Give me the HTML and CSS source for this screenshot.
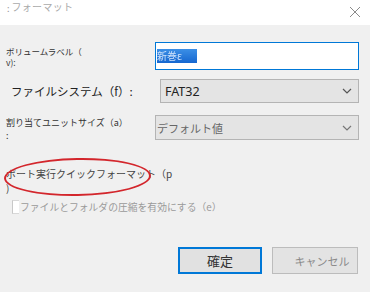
FILE: index.html
```html
<!DOCTYPE html>
<html lang="ja">
<head>
  <meta charset="UTF-8" />
  <meta name="viewport" content="width=device-width, initial-scale=1" />
  <title>フォーマット</title>
  <link rel="stylesheet" href="styles.css">
</head>
<body>

<div class="dialog">
  <div class="titlebar">
    <span class="title-mark">:</span>
    <span class="title">フォーマット</span>
    <svg class="close" width="12" height="12" viewBox="0 0 12 12">
      <path d="M1 1 L11 11 M11 1 L1 11" stroke="#8a8a8a" stroke-width="1" fill="none" />
    </svg>
  </div>

  <div class="content">
    <div class="row row-volume">
      <label class="lbl lbl-small">ボリュームラベル（<br>v):</label>
      <div class="field input"><span class="sel">新巻ε</span></div>
    </div>

    <div class="row row-fs">
      <label class="lbl lbl-big">ファイルシステム（f）:</label>
      <div class="field combo">
        <span class="combo-text">FAT32</span>
        <svg class="chev" width="10" height="6" viewBox="0 0 10 6">
          <path d="M1 1 L5 5 L9 1" stroke="#555" stroke-width="1.2" fill="none" />
        </svg>
      </div>
    </div>

    <div class="row row-unit">
      <label class="lbl lbl-small lbl-unit">割り当てユニットサイズ（a）<br>:</label>
      <div class="field combo">
        <span class="combo-text gray">デフォルト値</span>
        <svg class="chev" width="10" height="6" viewBox="0 0 10 6">
          <path d="M1 1 L5 5 L9 1" stroke="#777" stroke-width="1.2" fill="none" />
        </svg>
      </div>
    </div>

    <div class="quick">
      <span class="quick-text">ポート実行クイックフォーマット（p</span>
      <span class="quick-text">)</span>
      <span class="circle"></span>
    </div>

    <div class="check">
      <span class="box"></span>
      <span class="check-text">ファイルとフォルダの圧縮を有効にする（e）</span>
    </div>

    <div class="buttons">
      <button class="btn btn-ok">確定</button>
      <button class="btn btn-cancel">キャンセル</button>
    </div>
  </div>
</div>

</body>
</html>
```

FILE: styles.css
```css
body {
  margin: 0;
  font-family: "Noto Sans CJK JP", "Noto Sans", sans-serif;
  background-color: #f0f0f0;
  color: #222;
}
.dialog {
  width: 370px;
  height: 292px;
  background-color: #f0f0f0;
}
.titlebar {
  height: 25px;
  background: white;
  display: flex;
  align-items: flex-start;
  padding-left: 7px;
  padding-right: 9px;
  box-sizing: border-box;
}
.title-mark {
  font-size: 9px;
  color: #999;
  line-height: 14px;
  padding-top: 2px;
}
.title {
  font-size: 10px;
  line-height: 12px;
  padding-top: 1px;
  padding-left: 2px;
  color: #aaa;
  letter-spacing: 0.3px;
}
.close {
  margin-left: auto;
  margin-top: 6px;
}
.content {
  padding: 0 11px 0 5px;
}
.row {
  display: flex;
  align-items: center;
}
.row-volume {
  margin-top: 17px;
  height: 28px;
}
.row-fs {
  margin-top: 9px;
  height: 24px;
}
.row-unit {
  margin-top: 12px;
  height: 25px;
}
.lbl {
  width: 149px;
  flex-shrink: 0;
  color: #333;
}
.lbl-small {
  font-size: 8.5px;
  line-height: 11px;
  padding-left: 1px;
  padding-top: 1px;
}
.lbl-unit {
  font-size: 9px;
  line-height: 13px;
  padding-top: 3px;
}
.lbl-big {
  font-size: 11.5px;
  padding-left: 6px;
  color: #222;
}
.field {
  width: 205px;
  height: 100%;
  box-sizing: border-box;
}
.input {
  background: white;
  border: 1px solid #0078d7;
  padding: 1px 0 0 1px;
}
.sel {
  display: inline-block;
  width: 40px;
  height: 14px;
  background: linear-gradient(#3b8fe6, #1667d0);
  color: #cfe3fb;
  font-size: 10px;
  line-height: 14px;
  overflow: hidden;
  filter: blur(0.5px);
}
.combo {
  background-color: #e4e4e4;
  border: 1px solid #b4b4b4;
  display: flex;
  align-items: center;
  padding: 0 6px 0 4px;
}
.combo-text {
  font-family: "Noto Sans", "Noto Sans CJK JP", sans-serif;
  font-size: 12.5px;
  color: #222;
}
.combo-text.gray {
  font-family: "Noto Sans CJK JP", sans-serif;
  font-size: 11px;
  color: #666;
  margin-left: -3px;
}
.chev {
  margin-left: auto;
}
.quick {
  position: relative;
  display: flex;
  flex-direction: column;
  margin-top: 27px;
  padding-left: 1px;
}
.quick-text {
  font-size: 10px;
  line-height: 14px;
  color: #444;
}
.circle {
  position: absolute;
  left: -1px;
  top: -9px;
  width: 143px;
  height: 34px;
  border: 2px solid #d3262c;
  border-radius: 50%;
  transform: rotate(-1deg);
}
.check {
  display: flex;
  align-items: center;
  margin-top: 4px;
  height: 16px;
  padding-left: 7px;
}
.box {
  width: 6px;
  height: 12px;
  background: white;
  border-left: 1px solid #c8c8c8;
  border-top: 1px solid #d8d8d8;
  border-bottom: 1px solid #d8d8d8;
  margin-right: 1px;
}
.check-text {
  font-size: 9.8px;
  color: #9a9a9a;
}
.buttons {
  display: flex;
  justify-content: flex-end;
  gap: 10px;
  margin-top: 32px;
  padding-right: 1px;
}
.btn {
  height: 27px;
  font-family: "Noto Sans CJK JP", sans-serif;
  box-sizing: border-box;
  padding: 0;
}
.btn-ok {
  width: 84px;
  background-color: #e1e1e1;
  border: 2px solid #0078d7;
  font-size: 13px;
  color: #333;
}
.btn-cancel {
  width: 86px;
  background-color: #e3e3e3;
  border: 1px solid #bcbcbc;
  font-size: 11px;
  color: #8a8a8a;
  padding-left: 14px;
}
```
